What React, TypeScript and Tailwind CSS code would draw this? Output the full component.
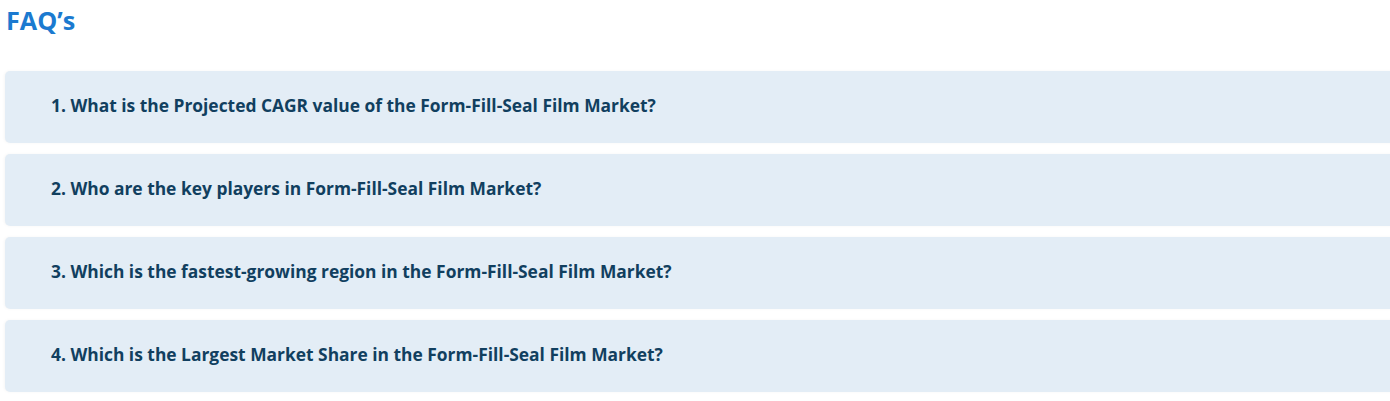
const faqs = [
  '1. What is the Projected CAGR value of the Form-Fill-Seal Film Market?',
  '2. Who are the key players in Form-Fill-Seal Film Market?',
  '3. Which is the fastest-growing region in the Form-Fill-Seal Film Market?',
  '4. Which is the Largest Market Share in the Form-Fill-Seal Film Market?',
];

export default function App() {
  return (
    <div className="bg-white w-[1390px] h-[401px] overflow-hidden font-['Open_Sans',sans-serif]">
      <h2 className="pl-[6px] pt-[3px] text-[25.2px] leading-[34px] font-bold text-[#1b7ad0]">FAQ’s</h2>
      <div className="mt-[34px] ml-[5px] -mr-[20px] flex flex-col gap-[11px]">
        {faqs.map((q) => (
          <div
            key={q}
            className="h-[72px] flex items-center pl-[46px] pb-[3px] rounded-[5px] bg-[#e3edf6] shadow-[-1px_0_3px_rgba(0,0,0,0.04)]"
          >
            <span className="text-[17.4px] font-bold text-[#113f5f]">{q}</span>
          </div>
        ))}
      </div>
    </div>
  );
}
